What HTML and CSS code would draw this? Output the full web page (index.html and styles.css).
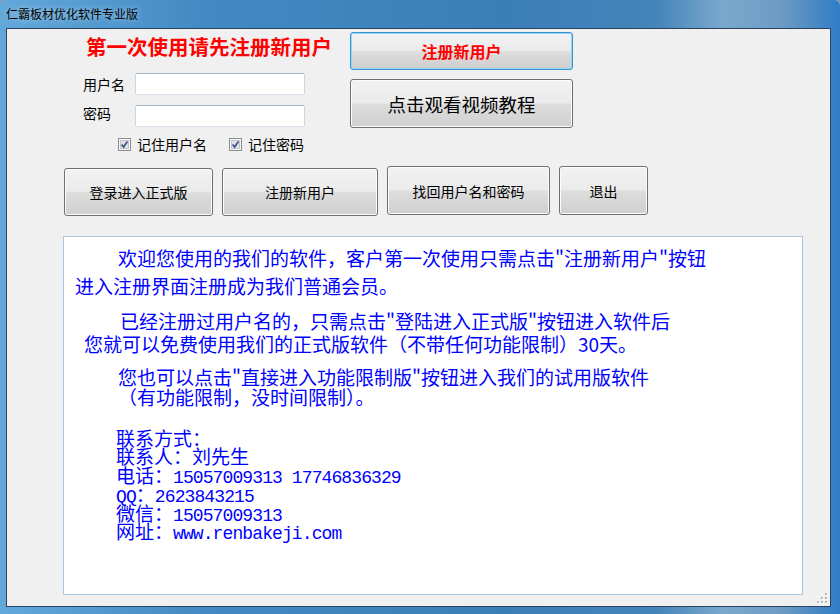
FILE: index.html
```html
<!DOCTYPE html>
<html lang="zh-CN">

<head>
  <meta charset="UTF-8" />
  <meta name="viewport" content="width=device-width, initial-scale=1.0" />
  <title>仁霸板材优化软件专业版</title>
  <link rel="stylesheet" href="styles.css">
</head>

<body>
  <div class="window">
    <header class="titlebar">仁霸板材优化软件专业版</header>
    <div class="client">
      <section class="top">
        <div class="login">
          <h1 class="notice">第一次使用请先注册新用户</h1>
          <div class="field field-user">
            <label>用户名</label>
            <input type="text">
          </div>
          <div class="field field-pwd">
            <label>密码</label>
            <input type="password">
          </div>
          <div class="checks">
            <span class="check">
              <svg width="13" height="13" viewBox="0 0 13 13">
                <rect x="0.5" y="0.5" width="12" height="12" fill="#f6f6f6" stroke="#8e8f8f" />
                <rect x="2.5" y="2.5" width="8" height="8" fill="#e1e2e4" stroke="#c4c6c9" />
                <path d="M3.6 6.4 L5.6 9 L9.4 3.6" fill="none" stroke="#3f5488" stroke-width="1.7" />
              </svg>
              记住用户名
            </span>
            <span class="check">
              <svg width="13" height="13" viewBox="0 0 13 13">
                <rect x="0.5" y="0.5" width="12" height="12" fill="#f6f6f6" stroke="#8e8f8f" />
                <rect x="2.5" y="2.5" width="8" height="8" fill="#e1e2e4" stroke="#c4c6c9" />
                <path d="M3.6 6.4 L5.6 9 L9.4 3.6" fill="none" stroke="#3f5488" stroke-width="1.7" />
              </svg>
              记住密码
            </span>
          </div>
        </div>
        <div class="side">
          <button class="btn btn-default btn-register">注册新用户</button>
          <button class="btn btn-video">点击观看视频教程</button>
        </div>
      </section>

      <section class="actions">
        <button class="btn btn-login">登录进入正式版</button>
        <button class="btn btn-reg">注册新用户</button>
        <button class="btn btn-find">找回用户名和密码</button>
        <button class="btn btn-exit">退出</button>
      </section>

      <div class="memo">
        <p class="p1">欢迎您使用的我们的软件，客户第一次使用只需点击"注册新用户"按钮<br>进入注册界面注册成为我们普通会员。</p>
        <p class="p2">已经注册过用户名的，只需点击"登陆进入正式版"按钮进入软件后<br>您就可以免费使用我们的正式版软件（不带任何功能限制）30天。</p>
        <p class="p3">您也可以点击"直接进入功能限制版"按钮进入我们的试用版软件<br>（有功能限制，没时间限制）。</p>
        <div class="contact">
          <div class="line">联系方式：</div>
          <div class="line">联系人：刘先生</div>
          <div class="line">电话：<span class="en">15057009313 17746836329</span></div>
          <div class="line"><span class="en">QQ</span>：<span class="en">2623843215</span></div>
          <div class="line">微信：<span class="en">15057009313</span></div>
          <div class="line">网址：<span class="en">www.renbakeji.com</span></div>
        </div>
      </div>

      <svg class="grip" width="12" height="12" viewBox="0 0 12 12">
        <rect x="9" y="1" width="2" height="2" fill="#fff" />
        <rect x="9" y="5" width="2" height="2" fill="#fff" />
        <rect x="5" y="5" width="2" height="2" fill="#fff" />
        <rect x="9" y="9" width="2" height="2" fill="#fff" />
        <rect x="5" y="9" width="2" height="2" fill="#fff" />
        <rect x="1" y="9" width="2" height="2" fill="#fff" />
        <rect x="8" y="0" width="2" height="2" fill="#b9b9b9" />
        <rect x="8" y="4" width="2" height="2" fill="#b9b9b9" />
        <rect x="4" y="4" width="2" height="2" fill="#b9b9b9" />
        <rect x="8" y="8" width="2" height="2" fill="#b9b9b9" />
        <rect x="4" y="8" width="2" height="2" fill="#b9b9b9" />
        <rect x="0" y="8" width="2" height="2" fill="#b9b9b9" />
      </svg>
    </div>
  </div>
</body>

</html>
```

FILE: styles.css
```css
* {
  box-sizing: border-box;
}

html,
body {
  margin: 0;
  width: 840px;
  height: 614px;
  overflow: hidden;
  background: #7f9fba;
  font-family: "Noto Sans CJK SC", sans-serif;
}

.window {
  width: 840px;
  height: 614px;
  padding: 0 9px 7px 6px;
  display: flex;
  flex-direction: column;
  border-radius: 6px 6px 0 0;
  background: linear-gradient(to right, #62a8da 0%, #4289c3 25%, #3b7fb7 60%, #4384ba 78%, #7aa8cd 86%, #6d9bc4 93%, #2f7cc6 100%);
}

.titlebar {
  height: 28px;
  line-height: 27px;
  font-size: 12px;
  color: #000;
  text-shadow: 0 0 6px rgba(255, 255, 255, 0.6);
}

.client {
  position: relative;
  flex: 1;
  border: 1px solid #2b4560;
  background: #f0f0f0;
}

.top {
  display: flex;
  height: 122px;
}

.login {
  width: 343px;
}

.notice {
  margin: 7px 0 0 79px;
  font-size: 20.5px;
  line-height: 20.5px;
  font-weight: bold;
  color: #ff0000;
}

.field {
  display: flex;
  align-items: center;
  height: 22px;
  margin-top: 10px;
}

.field-user {
  margin-top: 16.5px;
}

.field label {
  width: 52px;
  margin-left: 76px;
  font-size: 14px;
  line-height: 16px;
}

.field-pwd label {
  align-self: flex-start;
}

.field input {
  width: 170px;
  height: 22px;
  margin: 0;
  padding: 0 3px;
  border: 1px solid;
  border-color: #a1b6cb #c8d6e4 #d7e2ed #c8d6e4;
  border-radius: 2px;
  background: #fff;
}

.checks {
  display: flex;
  height: 13px;
  margin: 11px 0 0 111px;
  font-size: 14px;
  line-height: 13px;
}

.check {
  display: flex;
  align-items: center;
  gap: 6px;
}

.check + .check {
  margin-left: 22px;
}

.side {
  display: flex;
  flex-direction: column;
  gap: 9px;
  width: 223px;
  padding-top: 3px;
}

.btn {
  margin: 0;
  padding: 0;
  border: 1px solid #707070;
  border-radius: 3px;
  background: linear-gradient(#f2f2f2 0%, #ebebeb 48%, #dddddd 52%, #cfcfcf 100%);
  box-shadow: inset 0 0 0 1px #fcfcfc;
  font-family: "Noto Sans CJK SC", sans-serif;
  font-size: 14px;
  color: #000;
  cursor: pointer;
}

.btn-default {
  border-color: #3c8fd0;
  box-shadow: inset 0 0 0 1px #8fd8f8;
}

.btn-register {
  height: 38px;
  font-size: 16px;
  font-weight: bold;
  color: #ff0000;
}

.btn-video {
  height: 49px;
  font-size: 18.5px;
}

.actions {
  display: flex;
  align-items: flex-start;
  gap: 9px;
  margin: 15px 0 0 57px;
}

.btn-login,
.btn-reg {
  height: 48px;
  margin-top: 2px;
}

.btn-login {
  width: 149px;
}

.btn-reg {
  width: 156px;
}

.btn-find,
.btn-exit {
  height: 49px;
}

.btn-find {
  width: 163px;
}

.btn-exit {
  width: 89px;
}

.memo {
  width: 740px;
  height: 359px;
  margin: 20px 0 0 56px;
  padding-top: 7px;
  border: 1px solid #a9c7e3;
  background: #fff;
  color: #0000ff;
  font-size: 19px;
  white-space: nowrap;
}

.memo p {
  margin: 0;
}

.p1 {
  padding-left: 11px;
  text-indent: 43px;
  line-height: 28px;
}

.p2 {
  margin-top: 10px !important;
  padding-left: 20px;
  text-indent: 36px;
  line-height: 22.5px;
}

.p3 {
  margin-top: 12px !important;
  padding-left: 54px;
  line-height: 19.5px;
}

.contact {
  margin-top: 22.5px;
  padding-left: 52px;
}

.contact .line {
  height: 18.8px;
  line-height: 18.8px;
}

.en {
  font-family: "Liberation Mono", monospace;
  font-size: 18px;
  letter-spacing: -0.9px;
  line-height: 0;
}

.grip {
  position: absolute;
  right: 1px;
  bottom: 1px;
}
```
